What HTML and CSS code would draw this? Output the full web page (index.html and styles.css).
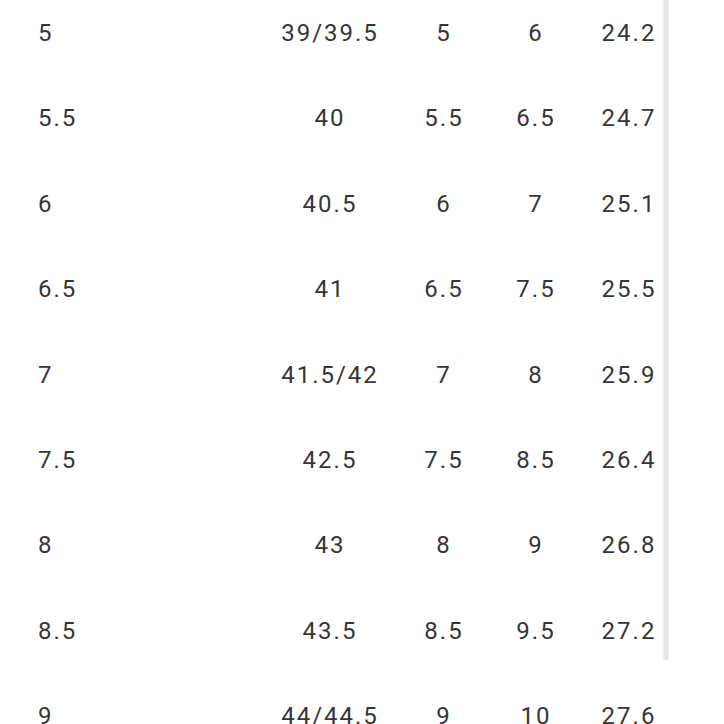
FILE: index.html
```html
<!DOCTYPE html>
<html>
<head>
<meta charset="utf-8">
<link rel="stylesheet" href="styles.css">
</head>
<body>
<div class="page">
  <div class="chart">
    <div class="row"><span class="c1">5</span><span class="c2">39/39.5</span><span class="c3">5</span><span class="c4">6</span><span class="c5">24.2</span></div>
    <div class="row"><span class="c1">5.5</span><span class="c2">40</span><span class="c3">5.5</span><span class="c4">6.5</span><span class="c5">24.7</span></div>
    <div class="row"><span class="c1">6</span><span class="c2">40.5</span><span class="c3">6</span><span class="c4">7</span><span class="c5">25.1</span></div>
    <div class="row"><span class="c1">6.5</span><span class="c2">41</span><span class="c3">6.5</span><span class="c4">7.5</span><span class="c5">25.5</span></div>
    <div class="row"><span class="c1">7</span><span class="c2">41.5/42</span><span class="c3">7</span><span class="c4">8</span><span class="c5">25.9</span></div>
    <div class="row"><span class="c1">7.5</span><span class="c2">42.5</span><span class="c3">7.5</span><span class="c4">8.5</span><span class="c5">26.4</span></div>
    <div class="row"><span class="c1">8</span><span class="c2">43</span><span class="c3">8</span><span class="c4">9</span><span class="c5">26.8</span></div>
    <div class="row"><span class="c1">8.5</span><span class="c2">43.5</span><span class="c3">8.5</span><span class="c4">9.5</span><span class="c5">27.2</span></div>
    <div class="row"><span class="c1">9</span><span class="c2">44/44.5</span><span class="c3">9</span><span class="c4">10</span><span class="c5">27.6</span></div>
  </div>
  <div class="bar"></div>
</div>
</body>
</html>
```
FILE: styles.css
```css
html, body {
  margin: 0;
  padding: 0;
  background: #ffffff;
  overflow: hidden;
}
.page {
  display: flex;
  align-items: flex-start;
  width: 724px;
  height: 724px;
  overflow: hidden;
}
.chart {
  width: 662px;
  margin-top: -9.7px;
  font-family: Roboto, "Liberation Sans", sans-serif;
  font-size: 24px;
  letter-spacing: 2px;
  color: #363636;
  flex-shrink: 0;
}
.row {
  display: grid;
  grid-template-columns: 232px 120px 106px 78px 108px;
  padding-left: 38px;
  height: 85.4px;
  align-items: center;
}
.row span {
  line-height: 30px;
}
.c1 { text-align: left; }
.c2, .c3, .c4, .c5 { text-align: center; padding-left: 2px; }
.c2 { padding-left: 0; }
.bar {
  width: 6px;
  height: 660px;
  margin-left: 1px;
  background: linear-gradient(to right, #f0f0f0, #e2e2e2 50%, #ececec);
  flex-shrink: 0;
}
```
